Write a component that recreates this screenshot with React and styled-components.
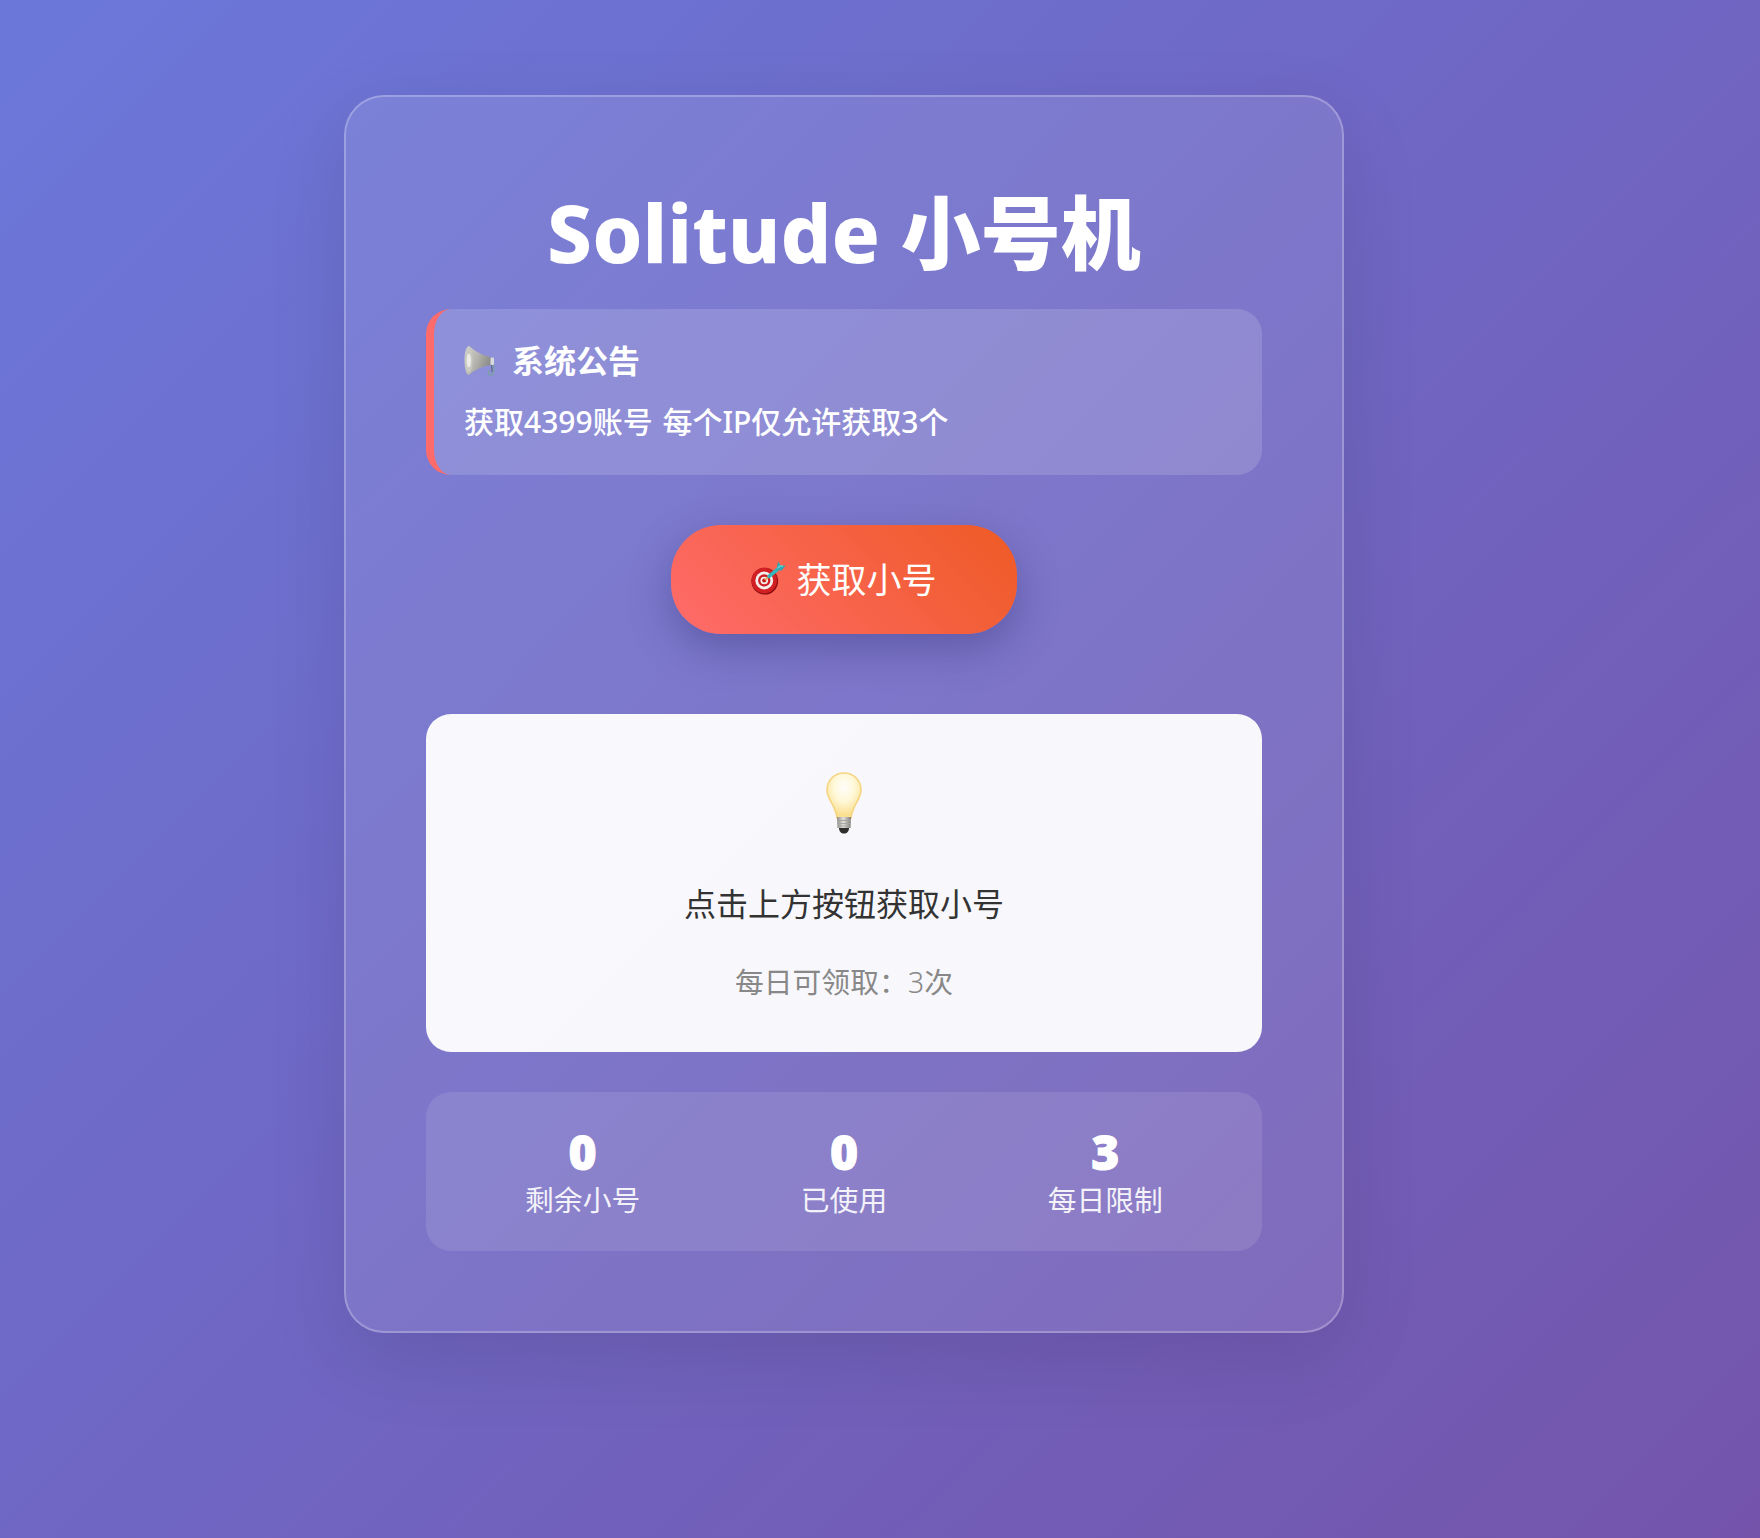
import styled, { createGlobalStyle } from "styled-components";

const GlobalStyle = createGlobalStyle`
  * { box-sizing: border-box; margin: 0; padding: 0; }
  body {
    font-family: "Noto Sans", "Noto Sans CJK SC", sans-serif;
  }
`;

const Page = styled.div`
  width: 1760px;
  height: 1538px;
  padding: 95px 0 0 344px;
  background: linear-gradient(135deg, #6b78da 0%, #7454ab 100%);
`;

const Card = styled.div`
  width: 1000px;
  height: 1238px;
  padding: 80px;
  border: 2px solid rgba(255, 255, 255, 0.25);
  border-radius: 40px;
  background: rgba(255, 255, 255, 0.1);
  box-shadow: 0 25px 80px rgba(0, 0, 0, 0.1);
`;

const Title = styled.h1`
  font-size: 80px;
  line-height: 110px;
  font-weight: 800;
  text-align: center;
  color: #fff;
  margin-bottom: 22px;
`;

const Notice = styled.div`
  height: 166px;
  padding: 30px 30px;
  border-left: 8px solid #ff6b6b;
  border-radius: 25px;
  background: rgba(255, 255, 255, 0.15);
  color: #fff;
`;

const NoticeHead = styled.div`
  display: flex;
  align-items: center;
  gap: 16px;
  font-size: 32px;
  line-height: 44px;
  font-weight: 700;
  margin-bottom: 17px;
`;

const NoticeText = styled.div`
  font-size: 30px;
  line-height: 44px;
  font-weight: 500;
  word-spacing: 2px;
`;

const Btn = styled.button`
  display: flex;
  align-items: center;
  justify-content: center;
  gap: 10px;
  width: 346px;
  height: 109px;
  margin: 50px auto 80px;
  padding-bottom: 5px;
  border: none;
  border-radius: 50px;
  font: inherit;
  font-size: 35px;
  color: #fff;
  background: linear-gradient(45deg, #ff6b6b, #ee5a24);
  box-shadow: 0 15px 40px rgba(40, 40, 110, 0.35);
`;

const Result = styled.div`
  height: 338px;
  padding-top: 58px;
  border-radius: 25px;
  background: rgba(255, 255, 255, 0.95);
  text-align: center;
  margin-bottom: 40px;
`;

const BulbWrap = styled.div`
  display: flex;
  justify-content: center;
  height: 64px;
  margin-bottom: 46px;
`;

const Hint = styled.div`
  font-size: 32px;
  line-height: 44px;
  color: #333;
  margin-bottom: 34px;
`;

const Sub = styled.div`
  font-size: 28.8px;
  line-height: 44px;
  color: #888;
`;

const Light = styled.span`
  font-weight: 300;
`;

const Stats = styled.div`
  display: grid;
  grid-template-columns: repeat(3, 1fr);
  height: 159px;
  padding: 32px 26px;
  border-radius: 25px;
  background: rgba(255, 255, 255, 0.1);
  text-align: center;
  color: #fff;
`;

const StatNum = styled.div`
  font-size: 48px;
  line-height: 56px;
  font-weight: 900;
  -webkit-text-stroke: 1px #fff;
`;

const StatLabel = styled.div`
  font-size: 28.8px;
  line-height: 40px;
  opacity: 0.9;
`;

const MegaphoneIcon = () => (
  <svg width="32" height="32" viewBox="0 0 32 32">
    <defs>
      <linearGradient id="horn" x1="0" y1="0" x2="1" y2="0.4">
        <stop offset="0" stopColor="#d8d6cf" />
        <stop offset="0.55" stopColor="#b4b3ad" />
        <stop offset="1" stopColor="#8b8c88" />
      </linearGradient>
    </defs>
    <path d="M29 14 L30 26 L28.500 30 L24.500 29.500 L25 25" fill="none" stroke="#7d9cb0" strokeWidth="1.7" />
    <path d="M27.500 15 L28 27" fill="none" stroke="#4f5f6d" strokeWidth="1" />
    <path d="M5 1 C10 5 17 10 26 12 L28 13 L28 19 L26 20 C17 22 10 25 5 30 C2 30 0.500 23 0.500 15.500 C0.500 8 2 1.500 5 1 Z" fill="url(#horn)" />
    <ellipse cx="4.800" cy="15.500" rx="3.800" ry="12" fill="#c9c8c1" />
    <ellipse cx="4.800" cy="15.500" rx="2.200" ry="7" fill="#ecebe5" />
    <rect x="26.500" y="12.500" width="3.500" height="7.500" rx="1.200" fill="#d7dbdc" />
  </svg>
);

const TargetIcon = () => (
  <svg width="35" height="35" viewBox="0 0 33 33">
    <circle cx="13" cy="20" r="12.6" fill="#8f0f12" />
    <circle cx="12.500" cy="19.300" r="12" fill="#d21f24" />
    <circle cx="12.500" cy="19.300" r="8.400" fill="#f4efec" />
    <circle cx="12.500" cy="19.300" r="5.800" fill="#cf2026" />
    <circle cx="12.500" cy="19.300" r="3.600" fill="#f4efec" />
    <circle cx="12.500" cy="19.300" r="1.900" fill="#c3171c" />
    <path d="M13 19 L25 9" stroke="#e9a14a" strokeWidth="1.6" />
    <path d="M17 15.500 L24.500 9.200" stroke="#36b5bd" strokeWidth="3.400" strokeLinecap="round" />
    <path d="M24 9 L25.500 1.500 L28 5 L32.500 5.500 L29 10 L24 9.500 Z" fill="#2fa7b3" />
    <path d="M25 8 L27.500 5.500 L30 6" fill="none" stroke="#7adde0" strokeWidth="1" />
  </svg>
);

const BulbIcon = () => (
  <svg width="36" height="64" viewBox="0 0 36 64">
    <defs>
      <radialGradient id="glass" cx="0.5" cy="0.32" r="0.62">
        <stop offset="0" stopColor="#fffefa" />
        <stop offset="0.5" stopColor="#fff8d8" />
        <stop offset="1" stopColor="#fbdf90" />
      </radialGradient>
      <linearGradient id="screw" x1="0" y1="0" x2="1" y2="0">
        <stop offset="0" stopColor="#8f8e88" />
        <stop offset="0.45" stopColor="#e0dfda" />
        <stop offset="1" stopColor="#7d7c77" />
      </linearGradient>
    </defs>
    <path d="M18 1 C8 1 1 8.500 1 18 C1 27 8 31 10.500 43 L11 46 L25 46 L25.500 43 C28 31 35 27 35 18 C35 8.500 28 1 18 1 Z" fill="url(#glass)" stroke="#f6d580" strokeWidth="1.6" />
    <path d="M11 45 H25 L24.500 56 H11.500 Z" fill="url(#screw)" />
    <path d="M11 48.500 H25 M11.200 51.500 H24.800 M11.400 54 H24.600" stroke="#a5a49f" strokeWidth="0.9" />
    <path d="M13 56 H23 C23 59.500 21 61.500 18 61.500 C15 61.500 13 59.500 13 56 Z" fill="#2f2e2c" />
  </svg>
);

const stats = [
  { num: 0, label: "剩余小号" },
  { num: 0, label: "已使用" },
  { num: 3, label: "每日限制" },
];

export default function App() {
  return (
    <>
      <GlobalStyle />
      <Page>
        <Card>
          <Title>Solitude 小号机</Title>
          <Notice>
            <NoticeHead>
              <MegaphoneIcon />
              系统公告
            </NoticeHead>
            <NoticeText>获取4399账号 每个IP仅允许获取3个</NoticeText>
          </Notice>
          <Btn>
            <TargetIcon />
            获取小号
          </Btn>
          <Result>
            <BulbWrap>
              <BulbIcon />
            </BulbWrap>
            <Hint>点击上方按钮获取小号</Hint>
            <Sub>
              每日可领取：<Light>3</Light>次
            </Sub>
          </Result>
          <Stats>
            {stats.map((s) => (
              <div key={s.label}>
                <StatNum>{s.num}</StatNum>
                <StatLabel>{s.label}</StatLabel>
              </div>
            ))}
          </Stats>
        </Card>
      </Page>
    </>
  );
}
